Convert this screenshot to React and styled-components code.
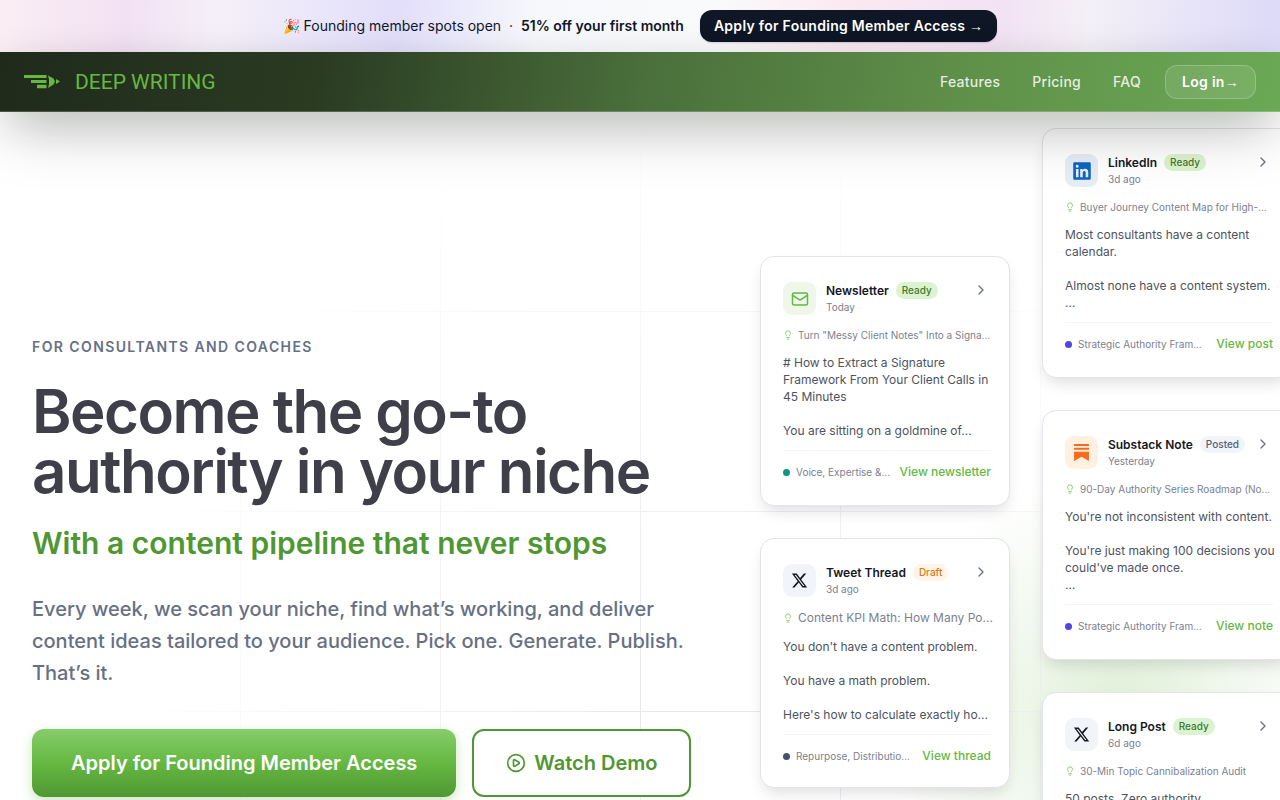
import React from "react";
import styled, { createGlobalStyle, css } from "styled-components";
import { ChevronRight, CirclePlay, Lightbulb, Mail } from "lucide-react";
import { FaLinkedin, FaXTwitter } from "react-icons/fa6";
import { SiSubstack } from "react-icons/si";

const GlobalStyle = createGlobalStyle`
    *, *::before, *::after {
        box-sizing: border-box;
    }
    body {
        margin: 0;
        background: #fff;
        color: #3f3f4a;
        font-family: Inter, "Liberation Sans", sans-serif;
    }
    h1, h2, h3, p {
        margin: 0;
    }
    a {
        color: inherit;
        text-decoration: none;
    }
    button {
        font-family: inherit;
        cursor: pointer;
    }
`;

const Banner = styled.div`
    display: flex;
    align-items: center;
    justify-content: center;
    gap: 16px;
    min-height: 52px;
    padding: 10px 24px;
    font-size: 14px;
    line-height: 20px;
    color: #0f172a;
    background: linear-gradient(
        94deg,
        #fbeef3 0%,
        #f2e1f4 10%,
        #f5f0f8 17%,
        #e2defb 31%,
        #f7f8fb 42%,
        #f9fafb 56%,
        #fbe9f1 66%,
        #f2e2f4 78%,
        #f4f0f7 85%,
        #dedbf9 99%
    );

    strong {
        font-weight: 600;
    }
`;

const BannerLink = styled.a`
    padding: 6px 14px;
    border-radius: 12px;
    background: #0f1726;
    color: #fff;
    font-weight: 600;
    letter-spacing: 0.02em;
    box-shadow: 0 1px 2px rgba(0, 0, 0, 0.15);
`;

const Arrow = styled.span`
    font-family: "Liberation Serif", serif;
    font-weight: 400;
    line-height: 1;
`;

const Header = styled.header`
    position: relative;
    z-index: 2;
    display: flex;
    align-items: center;
    justify-content: space-between;
    height: 60px;
    padding: 0 24px;
    border-bottom: 1px solid rgba(255, 255, 255, 0.2);
    background: linear-gradient(
        100deg,
        #1f2a1b 0%,
        #2a3b22 25%,
        #4a6f3b 50%,
        #5f9049 75%,
        #6ba955 100%
    );
    background-clip: border-box;
    box-shadow:
        0 25px 60px -10px rgba(0, 0, 0, 0.25),
        0 12px 40px -4px rgba(20, 50, 20, 0.14);
`;

const Brand = styled.a`
    display: flex;
    align-items: center;
    gap: 15px;
    color: #66b842;
    font-family: Roboto, "Liberation Sans", sans-serif;
    font-size: 21px;
    line-height: 24px;
`;

const Nav = styled.nav`
    display: flex;
    align-items: center;
    gap: 32px;
    font-size: 14px;
    font-weight: 500;
    line-height: 20px;
    letter-spacing: 0.02em;
    color: rgba(255, 255, 255, 0.85);
`;

const LoginLink = styled.a`
    margin-left: -8px;
    padding: 6px 16px;
    border: 1px solid rgba(255, 255, 255, 0.22);
    border-radius: 12px;
    background: rgba(255, 255, 255, 0.1);
    color: #fff;
    font-weight: 600;
`;

const Hero = styled.main`
    position: relative;
    display: grid;
    grid-template-columns: minmax(0, 1fr) 520px;
    padding-left: 32px;
    overflow: hidden;
    background: radial-gradient(
        circle 240px at 1120px 600px,
        #dff0d7,
        #f3f9f0 55%,
        rgba(255, 255, 255, 0)
    );
`;

/* 200px grid that fades out towards the top left */
const GridLines = styled.div`
    position: absolute;
    inset: 0;
    background-image:
        linear-gradient(90deg, #e5e7eb 1px, transparent 1px),
        linear-gradient(#e5e7eb 1px, transparent 1px);
    background-size: 200px 200px;
    background-position: 40px -1px;
    mask-image: radial-gradient(ellipse 560px 600px at 690px 600px, #000, transparent);
`;

const Intro = styled.section`
    position: relative;
    padding: 225px 0 48px;
`;

const Eyebrow = styled.p`
    font-size: 14px;
    font-weight: 600;
    line-height: 20px;
    letter-spacing: 0.1em;
    text-transform: uppercase;
    color: #667085;
`;

const Title = styled.h1`
    max-width: 672px;
    margin-top: 24px;
    font-size: 60px;
    font-weight: 600;
    line-height: 60px;
    letter-spacing: -0.025em;
    color: #3f3f4a;
`;

const Tagline = styled.p`
    margin-top: 24px;
    font-size: 30px;
    font-weight: 600;
    line-height: 36px;
    color: #4f9733;
`;

const Lead = styled.p`
    max-width: 672px;
    margin-top: 32px;
    font-size: 20px;
    line-height: 32px;
    font-weight: 500;
    color: #667085;
`;

const Actions = styled.div`
    display: flex;
    gap: 16px;
    margin-top: 40px;
`;

const ActionButton = styled.button`
    display: inline-flex;
    align-items: center;
    gap: 8px;
    height: 68px;
    padding: 0 32px;
    border: 2px solid #4f9733;
    border-radius: 12px;
    background: #fff;
    color: #4f9733;
    font-size: 20px;
    font-weight: 600;
    white-space: nowrap;

    ${({ $primary }) =>
        $primary &&
        css`
            padding: 0 39px;
            border: 0;
            background: linear-gradient(#86cd6b, #66b842 50%, #4f9733);
            color: #fff;
            box-shadow: 0 4px 12px rgba(102, 184, 66, 0.35);
        `}
`;

const Showcase = styled.section`
    position: relative;
    display: flex;
    align-items: flex-start;
    gap: 32px;
    max-height: 760px;
`;

const Column = styled.div`
    display: flex;
    flex: none;
    flex-direction: column;
    gap: 32px;
    width: 250px;
    padding-top: ${({ $top }) => $top}px;
`;

const Card = styled.article`
    display: flex;
    flex-direction: column;
    height: 250px;
    padding: 25px 18px 0 22px;
    border: 1px solid #e2e4ea;
    border-radius: 14px;
    background: #fff;
    box-shadow: 0 8px 16px -4px rgba(0, 0, 0, 0.14);
`;

const CardHead = styled.div`
    display: flex;
    align-items: flex-start;
    gap: 10px;
`;

const Badge = styled.div`
    display: grid;
    place-items: center;
    width: 33px;
    height: 33px;
    border-radius: 9px;
    background: ${({ $bg }) => $bg};
    color: ${({ $color }) => $color};
`;

const CardName = styled.div`
    flex: 1;
    font-size: 10px;
    line-height: 16px;
    color: #7b8190;
`;

const NameRow = styled.div`
    display: flex;
    align-items: center;
    gap: 7px;
`;

const CardTitle = styled.h3`
    font-size: 12px;
    font-weight: 600;
    line-height: 17px;
    color: #14171f;
    white-space: nowrap;
`;

const tones = {
    Ready: { bg: "#dcf3d2", color: "#427a2e" },
    Draft: { bg: "#fff4e6", color: "#d97b22" },
    Posted: { bg: "#f1f4f9", color: "#566074" },
};

const Status = styled.span`
    padding: 0 6px;
    border-radius: 9px;
    background: ${({ $tone }) => tones[$tone].bg};
    color: ${({ $tone }) => tones[$tone].color};
    font-size: 10px;
    font-weight: 500;
    line-height: 17px;
`;

const Chevron = styled(ChevronRight)`
    flex: none;
    margin-right: 2px;
    color: #6b7280;
`;

const Idea = styled.div`
    display: flex;
    align-items: center;
    gap: 5px;
    margin-top: 12px;
    color: #7b8190;
    font-size: ${({ $large }) => ($large ? 12 : 10)}px;
    line-height: ${({ $large }) => ($large ? 18 : 16)}px;
    white-space: nowrap;

    svg {
        flex: none;
        color: #7cc75c;
    }
`;

const Post = styled.p`
    margin-top: 11px;
    font-size: 12px;
    line-height: 17px;
    color: #4d535f;
    white-space: pre;
`;

const CardFoot = styled.div`
    display: flex;
    align-items: center;
    gap: 6px;
    margin-top: 11px;
    padding-top: 11px;
    border-top: 1px solid #f3f4f6;
    font-size: 10px;
    line-height: 20px;
    color: #7b8190;
    white-space: nowrap;

    a {
        margin-left: auto;
        color: #66b842;
        font-size: 12px;
        font-weight: 500;
    }
`;

const Dot = styled.span`
    width: 7px;
    height: 7px;
    border-radius: 50%;
    background: ${({ $color }) => $color};
`;

const newsletter = {
    name: "Newsletter",
    status: "Ready",
    time: "Today",
    icon: <Mail size={18} strokeWidth={2} />,
    bg: "#eef7ea",
    color: "#66b842",
    idea: 'Turn "Messy Client Notes" Into a Signa...',
    post: "# How to Extract a Signature\nFramework From Your Client Calls in\n45 Minutes\n\nYou are sitting on a goldmine of...",
    topic: "Voice, Expertise &...",
    dot: "#0d9488",
    link: "View newsletter",
};

const thread = {
    name: "Tweet Thread",
    status: "Draft",
    time: "3d ago",
    icon: <FaXTwitter size={17} />,
    bg: "#f1f5f9",
    color: "#14171f",
    idea: "Content KPI Math: How Many Po...",
    largeIdea: true,
    post: "You don't have a content problem.\n\nYou have a math problem.\n\nHere's how to calculate exactly ho...",
    topic: "Repurpose, Distributio...",
    dot: "#475069",
    link: "View thread",
};

const linkedin = {
    name: "LinkedIn",
    status: "Ready",
    time: "3d ago",
    icon: <FaLinkedin size={20} />,
    bg: "#e6edf5",
    color: "#0a66c2",
    idea: "Buyer Journey Content Map for High-...",
    post: "Most consultants have a content\ncalendar.\n\nAlmost none have a content system.\n...",
    topic: "Strategic Authority Fram...",
    dot: "#4f46e5",
    link: "View post",
};

const substack = {
    name: "Substack Note",
    status: "Posted",
    time: "Yesterday",
    icon: <SiSubstack size={17} />,
    bg: "#fff1e2",
    color: "#f76b1c",
    idea: "90-Day Authority Series Roadmap (No...",
    post: "You're not inconsistent with content.\n\nYou're just making 100 decisions you\ncould've made once.\n...",
    topic: "Strategic Authority Fram...",
    dot: "#4f46e5",
    link: "View note",
};

const longPost = {
    name: "Long Post",
    status: "Ready",
    time: "6d ago",
    icon: <FaXTwitter size={17} />,
    bg: "#f1f5f9",
    color: "#14171f",
    idea: "30-Min Topic Cannibalization Audit",
    post: "50 posts. Zero authority.",
    topic: "Strategic Authority Fram...",
    dot: "#4f46e5",
    link: "View post",
};

function PostCard({ item }) {
    return (
        <Card>
            <CardHead>
                <Badge $bg={item.bg} $color={item.color}>
                    {item.icon}
                </Badge>
                <CardName>
                    <NameRow>
                        <CardTitle>{item.name}</CardTitle>
                        <Status $tone={item.status}>{item.status}</Status>
                    </NameRow>
                    {item.time}
                </CardName>
                <Chevron size={16} />
            </CardHead>
            <Idea $large={item.largeIdea}>
                <Lightbulb size={10} />
                {item.idea}
            </Idea>
            <Post>{item.post}</Post>
            <CardFoot>
                <Dot $color={item.dot} />
                {item.topic}
                <a href="#post">{item.link}</a>
            </CardFoot>
        </Card>
    );
}

function PencilLogo() {
    return (
        <svg width="36" height="16" viewBox="0 0 36 16" fill="currentColor" aria-hidden="true">
            <path d="M0 1h22.500v3H0zM7 6h15.500v3H7zM13 10.800h9.500v3.400H13z" />
            <path d="M24 1.500l5.500 3 1.500 3-1.500 3-5.500 3.500 1-3.500v-5z" />
            <path d="M32 5l4 2.500-4 2.500z" />
        </svg>
    );
}

function App() {
    return (
        <>
            <GlobalStyle />
            <Banner>
                <span>
                    🎉 Founding member spots open &nbsp;·&nbsp; <strong>51% off your first month</strong>
                </span>
                <BannerLink href="#apply">
                    Apply for Founding Member Access <Arrow>→</Arrow>
                </BannerLink>
            </Banner>
            <Header>
                <Brand href="#home">
                    <PencilLogo />
                    DEEP WRITING
                </Brand>
                <Nav>
                    <a href="#features">Features</a>
                    <a href="#pricing">Pricing</a>
                    <a href="#faq">FAQ</a>
                    <LoginLink href="#login">
                        Log in<Arrow>→</Arrow>
                    </LoginLink>
                </Nav>
            </Header>
            <Hero>
                <GridLines />
                <Intro>
                    <Eyebrow>For consultants and coaches</Eyebrow>
                    <Title>Become the go-to authority in your niche</Title>
                    <Tagline>With a content pipeline that never stops</Tagline>
                    <Lead>
                        Every week, we scan your niche, find what’s working, and deliver
                        content ideas tailored to your audience. Pick one. Generate.
                        Publish. That’s it.
                    </Lead>
                    <Actions>
                        <ActionButton $primary>Apply for Founding Member Access</ActionButton>
                        <ActionButton>
                            <CirclePlay size={20} />
                            Watch Demo
                        </ActionButton>
                    </Actions>
                </Intro>
                <Showcase>
                    <Column $top={144}>
                        <PostCard item={newsletter} />
                        <PostCard item={thread} />
                    </Column>
                    <Column $top={16}>
                        <PostCard item={linkedin} />
                        <PostCard item={substack} />
                        <PostCard item={longPost} />
                    </Column>
                </Showcase>
            </Hero>
        </>
    );
}

export default App;
